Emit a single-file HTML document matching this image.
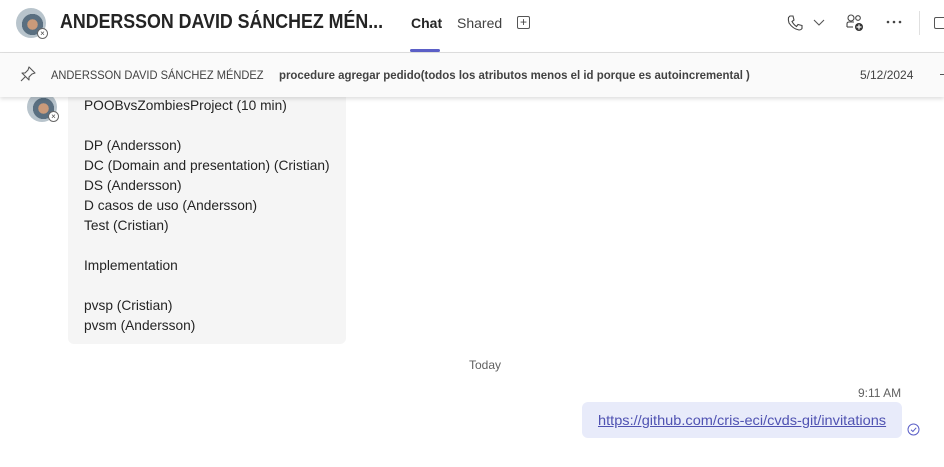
<!DOCTYPE html>
<html><head><meta charset="utf-8"><style>
*{margin:0;padding:0;box-sizing:border-box}
body{width:944px;height:467px;overflow:hidden;background:#fff;font-family:"Liberation Sans",sans-serif;color:#242424;position:relative}
.abs{position:absolute;white-space:nowrap}
.sx{transform-origin:0 0}
.av{border-radius:50%;background:radial-gradient(circle at 55% 55%,#c99a7a 0 22%,#5a6f80 23% 45%,#b8c4cc 46%);}
.badge{width:11px;height:11px;border-radius:50%;background:#fff;border:1px solid #666;font-size:8px;line-height:9px;text-align:center;color:#444}
.bubble{left:68px;top:80px;width:278px;height:264px;background:#f5f5f5;border-radius:6px}
.lines{left:84px;top:95px;font-size:14px;line-height:20px;color:#242424;transform:scaleX(0.98)}
</style></head><body>
<div class="abs av" style="left:16px;top:8px;width:30px;height:30px"></div>
<div class="abs badge" style="left:37px;top:28px">×</div>
<div class="abs sx" style="left:60px;top:11px;font-size:20px;font-weight:bold;color:#242424;transform:scaleX(0.89)">ANDERSSON DAVID SÁNCHEZ MÉN...</div>
<div class="abs" style="left:411px;top:15px;font-size:14px;font-weight:bold">Chat</div>
<div class="abs" style="left:410px;top:49px;width:30px;height:3px;background:#5b5fc7;border-radius:2px"></div>
<div class="abs" style="left:457px;top:15px;font-size:14px;color:#424242">Shared</div>
<div class="abs" style="left:517px;top:16px;width:13px;height:13px;border:1px solid #555;border-radius:2px;font-size:12px;line-height:11px;text-align:center;color:#444">+</div>
<svg class="abs" style="left:786px;top:14px" width="18" height="18" viewBox="0 0 18 18"><path d="M4 2 L7 2 L8 6 L6 7.5 Q8 11 10.5 12.5 L12 10.5 L16 11.5 L16 14.5 Q15 16 13 16 Q7 15 3 9 Q2 6 2.5 3.5 Z" fill="none" stroke="#444" stroke-width="1.1"/></svg>
<svg class="abs" style="left:813px;top:19px" width="12" height="8"><path d="M1 1 L6 6 L11 1" fill="none" stroke="#555" stroke-width="1.1"/></svg>
<svg class="abs" style="left:845px;top:13px" width="20" height="20" viewBox="0 0 20 20"><circle cx="6" cy="5" r="3" fill="none" stroke="#444" stroke-width="1.1"/><circle cx="13" cy="5" r="2.3" fill="none" stroke="#444" stroke-width="1.1"/><path d="M2 14 V11 Q2 9 4 9 H9" fill="none" stroke="#444" stroke-width="1.1"/><path d="M2 14 H8" stroke="#444" stroke-width="1.1"/><circle cx="14" cy="14" r="4" fill="#333"/><path d="M14 11.5V16.5M11.5 14H16.5" stroke="#fff" stroke-width="1.2"/></svg>
<svg class="abs" style="left:886px;top:20px" width="16" height="4"><circle cx="2" cy="2" r="1.3" fill="#444"/><circle cx="8" cy="2" r="1.3" fill="#444"/><circle cx="14" cy="2" r="1.3" fill="#444"/></svg>
<div class="abs" style="left:919px;top:11px;width:1px;height:24px;background:#e0e0e0"></div>
<div class="abs" style="left:934px;top:17px;width:12px;height:12px;border:1px solid #555;border-radius:2px"></div>
<div class="abs" style="left:0;top:52px;width:944px;height:1px;background:#e0e0e0"></div>
<div class="abs bubble"></div>
<div class="abs av" style="left:27px;top:92px;width:30px;height:30px"></div>
<div class="abs badge" style="left:48px;top:111px">×</div>
<div class="abs lines sx">POOBvsZombiesProject (10 min)<br><br>DP (Andersson)<br>DC (Domain and presentation) (Cristian)<br>DS (Andersson)<br>D casos de uso (Andersson)<br>Test (Cristian)<br><br>Implementation<br><br>pvsp (Cristian)<br>pvsm (Andersson)</div>
<div class="abs" style="left:0;top:53px;width:944px;height:44px;background:#fafafa;box-shadow:0 2px 4px rgba(0,0,0,.13)"></div>
<svg class="abs" style="left:19px;top:65px" width="18" height="18" viewBox="0 0 18 18"><path d="M10 2 L16 8 L13 9 L10 12 L10 15 L3 8 L6 8 L9 5 Z M6.5 11.5 L2 16" fill="none" stroke="#555" stroke-width="1.1" stroke-linejoin="round"/></svg>
<div class="abs sx" style="left:51px;top:68px;font-size:12px;color:#424242;transform:scaleX(0.925)">ANDERSSON DAVID SÁNCHEZ MÉNDEZ</div>
<div class="abs sx" style="left:279px;top:68px;font-size:12px;font-weight:bold;color:#424242;transform:scaleX(0.953)">procedure agregar pedido(todos los atributos menos el id porque es autoincremental )</div>
<div class="abs" style="left:860px;top:68px;font-size:12px;color:#424242">5/12/2024</div>
<div class="abs" style="left:940px;top:74px;width:6px;height:1px;background:#555"></div>
<div class="abs" style="left:469px;top:358px;font-size:12px;color:#616161">Today</div>
<div class="abs" style="left:858px;top:386px;font-size:12px;color:#616161">9:11 AM</div>
<div class="abs" style="left:582px;top:402px;width:320px;height:36px;background:#e8ebfa;border-radius:6px"></div>
<div class="abs sx" style="left:598px;top:412px;font-size:14px;color:#4f52b2;text-decoration:underline;transform:scaleX(1.04)">https://github.com/cris-eci/cvds-git/invitations</div>
<svg class="abs" style="left:907px;top:423px" width="13" height="13"><circle cx="6.5" cy="6.5" r="5.5" fill="none" stroke="#5b5fc7" stroke-width="1"/><path d="M4 6.7 L5.9 8.5 L9.2 4.8" fill="none" stroke="#5b5fc7" stroke-width="1"/></svg>
</body></html>
